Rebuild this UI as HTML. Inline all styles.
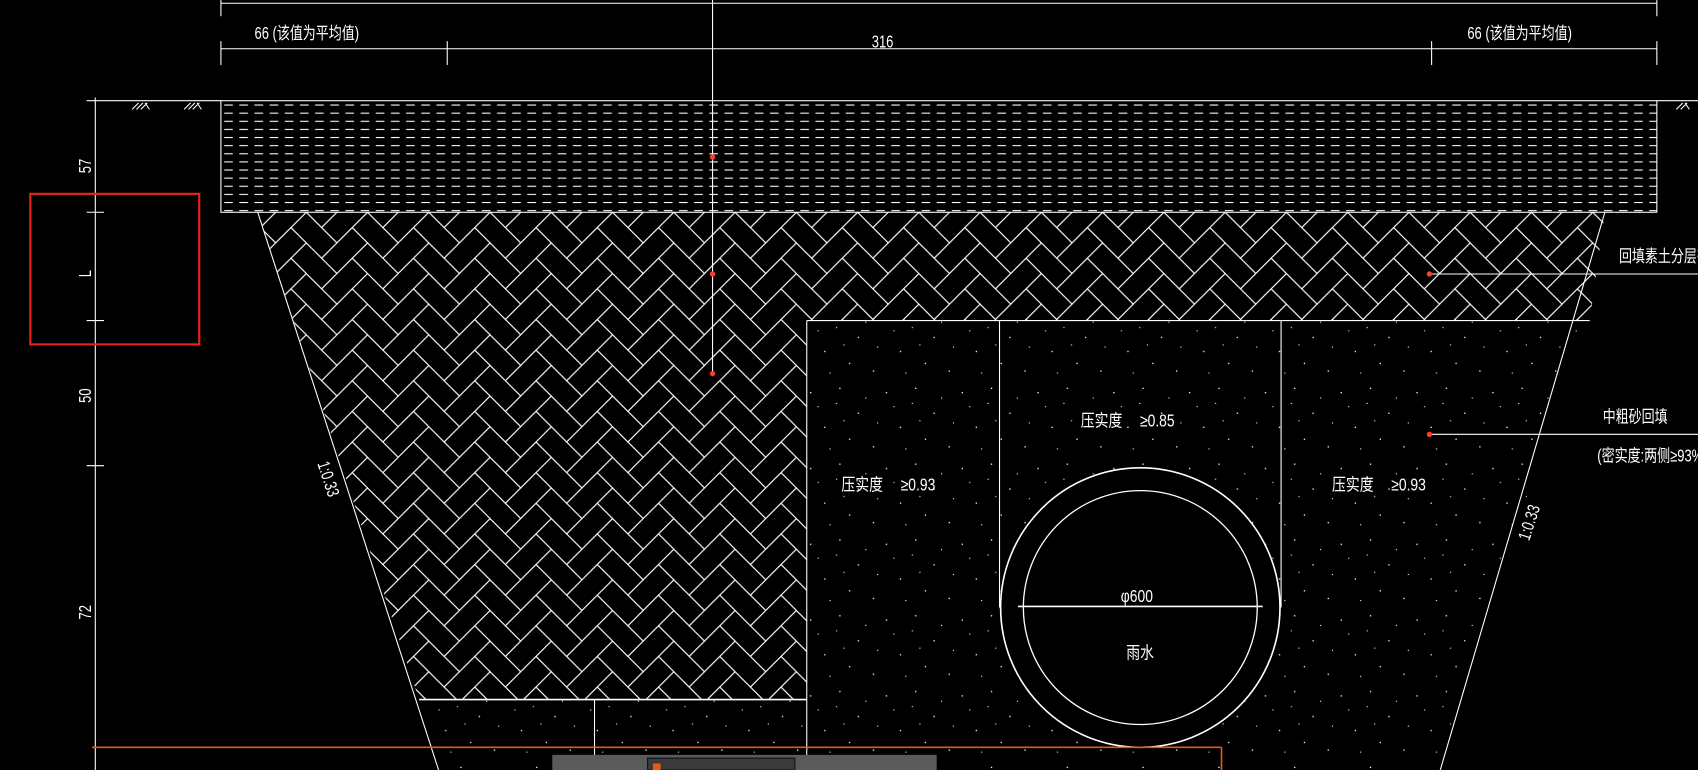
<!DOCTYPE html>
<html><head><meta charset="utf-8"><style>
html,body{margin:0;padding:0;background:#000;overflow:hidden}
svg{display:block}
text{font-family:"Liberation Sans","Noto Sans CJK SC",sans-serif;fill:#fff;font-size:16px}
</style></head><body>
<svg width="1698" height="770" viewBox="0 0 1568 711" preserveAspectRatio="none" xmlns="http://www.w3.org/2000/svg">
<defs>
<g id="pair" fill="none" stroke="#fff" stroke-width="0.9">
<rect x="0" y="0" width="40" height="20"/>
<rect x="40" y="-20" width="20" height="40"/>
</g>
<pattern id="hb" width="56.5685" height="28.2843" patternUnits="userSpaceOnUse" x="0" y="196">
<g transform="rotate(45)">
<use href="#pair" transform="translate(-40,-40)"/>
<use href="#pair" transform="translate(-20,-20)"/>
<use href="#pair" transform="translate(0,0)"/>
<use href="#pair" transform="translate(20,20)"/>
<use href="#pair" transform="translate(40,40)"/>
<use href="#pair" transform="translate(-80,0)"/>
<use href="#pair" transform="translate(-60,20)"/>
<use href="#pair" transform="translate(-40,40)"/>
<use href="#pair" transform="translate(-20,60)"/>
<use href="#pair" transform="translate(0,80)"/>
<use href="#pair" transform="translate(0,-80)"/>
<use href="#pair" transform="translate(20,-60)"/>
<use href="#pair" transform="translate(40,-40)"/>
<use href="#pair" transform="translate(60,-20)"/>
<use href="#pair" transform="translate(80,0)"/>
<use href="#pair" transform="translate(-100,-20)"/>
<use href="#pair" transform="translate(-60,-60)"/>
<use href="#pair" transform="translate(60,60)"/>
<use href="#pair" transform="translate(100,20)"/>
</g>
</pattern>
<pattern id="sand" width="70" height="70" patternUnits="userSpaceOnUse">
<g fill="#fff">
<rect x="5" y="8" width="1.2" height="1.2"/><rect x="22" y="31" width="1.2" height="1.2"/>
<rect x="48" y="12" width="1.2" height="1.2"/><rect x="61" y="44" width="1.2" height="1.2"/>
<rect x="14" y="55" width="1.2" height="1.2"/><rect x="36" y="62" width="1.2" height="1.2"/>
<rect x="40" y="40" width="1" height="1"/><rect x="9" y="38" width="1" height="1"/>
<rect x="55" y="25" width="1" height="1"/><rect x="29" y="17" width="1" height="1"/>
<rect x="66" y="64" width="1" height="1"/><rect x="2" y="22" width="1" height="1"/>
</g>
</pattern>
<pattern id="dash" width="14" height="7.5" patternUnits="userSpaceOnUse" x="204" y="93">
<line x1="3" y1="4" x2="11" y2="4" stroke="#fff" stroke-width="1"/>
</pattern>
</defs>
<g stroke="#fff" stroke-width="1" fill="none">
<line x1="204" y1="3" x2="1530" y2="3"/>
<line x1="204" y1="0" x2="204" y2="15"/><line x1="1530" y1="0" x2="1530" y2="15"/>
<line x1="204" y1="45" x2="1530" y2="45"/>
<line x1="204" y1="38" x2="204" y2="60"/><line x1="413" y1="38" x2="413" y2="60"/>
<line x1="1322" y1="38" x2="1322" y2="60"/><line x1="1530" y1="38" x2="1530" y2="60"/>
<line x1="88" y1="90" x2="88" y2="711"/>
<line x1="80" y1="93" x2="204" y2="93"/>
<line x1="80" y1="196" x2="96" y2="196"/><line x1="80" y1="296" x2="96" y2="296"/>
<line x1="80" y1="430" x2="96" y2="430"/>
<line x1="1530" y1="93" x2="1568" y2="93"/>
</g>
<polygon points="238,196 1482,196 1468,296 745,296 745,646 387,646" fill="url(#hb)"/>
<polygon points="745,296 1468,296 1330,711 745,711" fill="url(#sand)"/>
<polygon points="387,646 745,646 745,711 405,711" fill="url(#sand)"/>
<rect x="204" y="93" width="1326" height="103" fill="url(#dash)" stroke="#fff" stroke-width="1"/>
<g stroke="#fff" stroke-width="1" fill="none">
<line x1="238" y1="196" x2="405" y2="711"/>
<line x1="1482" y1="196" x2="1330" y2="711"/>
<line x1="745" y1="296" x2="1468" y2="296"/>
<line x1="745" y1="296" x2="745" y2="711"/>
<line x1="387" y1="646" x2="745" y2="646" stroke-width="1.5"/>
<line x1="549" y1="646" x2="549" y2="711"/>
<line x1="923" y1="296" x2="923" y2="561"/>
<line x1="1183" y1="296" x2="1183" y2="561"/>
<circle cx="1053" cy="561" r="129" fill="#000" stroke-width="1.5"/>
<circle cx="1053" cy="561" r="108" stroke-width="1.2"/>
<line x1="940" y1="560" x2="1166" y2="560" stroke-width="1.5"/>
<line x1="658" y1="0" x2="658" y2="345"/>
<line x1="1320" y1="253" x2="1568" y2="253"/>
<line x1="1320" y1="401" x2="1568" y2="401"/>
<path d="M122 101 l6 -6 M126 101 l6 -6 M130 101 l6 -6 M134 95 l4 6 M170 101 l6 -6 M174 101 l6 -6 M178 101 l6 -6 M182 95 l4 6 M1548 101 l6 -6 M1552 101 l6 -6 M1556 95 l4 6"/>
</g>
<g fill="#ff3b30"><circle cx="658" cy="145" r="2.5"/><circle cx="658" cy="253" r="2.5"/><circle cx="658" cy="345" r="2.5"/><circle cx="1320" cy="253" r="2.5"/><circle cx="1320" cy="401" r="2.5"/></g>
<rect x="28" y="179" width="156" height="139" fill="none" stroke="#e8231a" stroke-width="2"/>
<line x1="85" y1="690" x2="1128" y2="690" stroke="#e85a10" stroke-width="1.5"/>
<line x1="1128" y1="690" x2="1128" y2="711" stroke="#e85a10" stroke-width="1.5"/>
<rect x="510" y="697" width="355" height="14" fill="#5a5a5a"/>
<rect x="598" y="700" width="136" height="11" fill="#3a3a3a" stroke="#111"/>
<rect x="603" y="705" width="7" height="6" fill="#e85a10"/>
<text x="235" y="36" transform="translate(235,0) scale(0.75,1) translate(-235,0)">66 (该值为平均值)</text>
<text x="805" y="44" transform="translate(805,0) scale(0.75,1) translate(-805,0)">316</text>
<text x="1355" y="36" transform="translate(1355,0) scale(0.75,1) translate(-1355,0)">66 (该值为平均值)</text>
<text x="0" y="0" transform="translate(84,160) rotate(-90) scale(0.75,1)">57</text>
<text x="0" y="0" transform="translate(84,256) rotate(-90) scale(0.75,1)">L</text>
<text x="0" y="0" transform="translate(84,372) rotate(-90) scale(0.75,1)">50</text>
<text x="0" y="0" transform="translate(84,572) rotate(-90) scale(0.75,1)">72</text>
<text x="0" y="0" transform="translate(293,428) rotate(72) scale(0.75,1)">1:0.33</text>
<text x="0" y="0" transform="translate(1412,500) rotate(-72) scale(0.75,1)">1:0.33</text>
<text x="998" y="394" font-size="15" transform="translate(998,0) scale(0.8,1) translate(-998,0)">压实度　 ≥0.85</text>
<text x="777" y="453" font-size="15" transform="translate(777,0) scale(0.8,1) translate(-777,0)">压实度　 ≥0.93</text>
<text x="1230" y="453" font-size="15" transform="translate(1230,0) scale(0.8,1) translate(-1230,0)">压实度　 ≥0.93</text>
<text x="1035" y="556" font-size="15" transform="translate(1035,0) scale(0.8,1) translate(-1035,0)">φ600</text>
<text x="1040" y="608" font-size="14" transform="translate(1040,0) scale(0.8,1) translate(-1040,0)">雨水</text>
<text x="1495" y="242" font-size="14" transform="translate(1495,0) scale(0.75,1) translate(-1495,0)">回填素土分层夯</text>
<text x="1480" y="390" font-size="14" transform="translate(1480,0) scale(0.75,1) translate(-1480,0)">中粗砂回填</text>
<text x="1475" y="426" font-size="14" transform="translate(1475,0) scale(0.75,1) translate(-1475,0)">(密实度:两侧≥93%</text>
</svg>
</body></html>
